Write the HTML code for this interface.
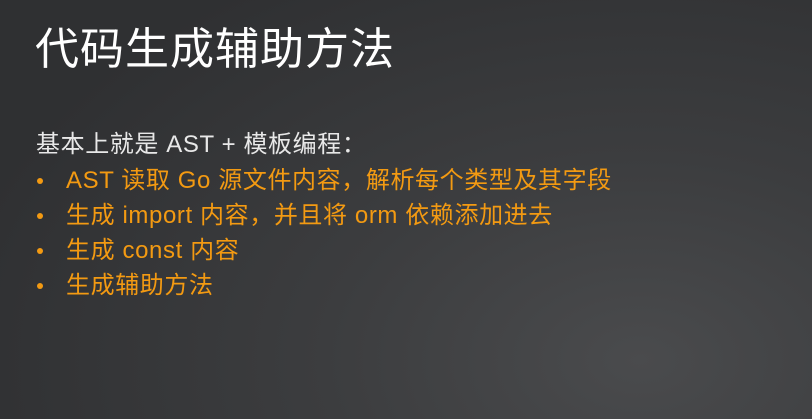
<!DOCTYPE html>
<html><head><meta charset="utf-8"><style>
html,body{margin:0;padding:0}
body{width:812px;height:419px;overflow:hidden;position:relative;
background:radial-gradient(ellipse 700px 450px at 640px 360px,#4a4b4d 0%,#3c3d3f 45%,#2f3032 100%);
font-family:"Liberation Sans","Noto Sans CJK SC",sans-serif;}
.t{position:absolute;left:35px;top:23px;font-size:44px;color:#fff;line-height:54px;letter-spacing:1px;white-space:nowrap}
.l{position:absolute;left:36px;font-size:24px;line-height:30px;letter-spacing:0.6px;white-space:nowrap}
.w{color:#e8e8e8}
.o{color:#f39a12}
.b{position:absolute;left:37px;width:6px;height:6px;border-radius:50%;background:#f39a12}
</style></head><body>
<div class="t">代码生成辅助方法</div>
<div class="l w" style="top:130px">基本上就是 AST + 模板编程：</div>
<div class="b" style="top:178px"></div><div class="l o" style="left:66px;top:166px">AST 读取 Go 源文件内容，解析每个类型及其字段</div>
<div class="b" style="top:213px"></div><div class="l o" style="left:66px;top:201px">生成 import 内容，并且将 orm 依赖添加进去</div>
<div class="b" style="top:248px"></div><div class="l o" style="left:66px;top:236px">生成 const 内容</div>
<div class="b" style="top:283px"></div><div class="l o" style="left:66px;top:271px">生成辅助方法</div>
</body></html>
